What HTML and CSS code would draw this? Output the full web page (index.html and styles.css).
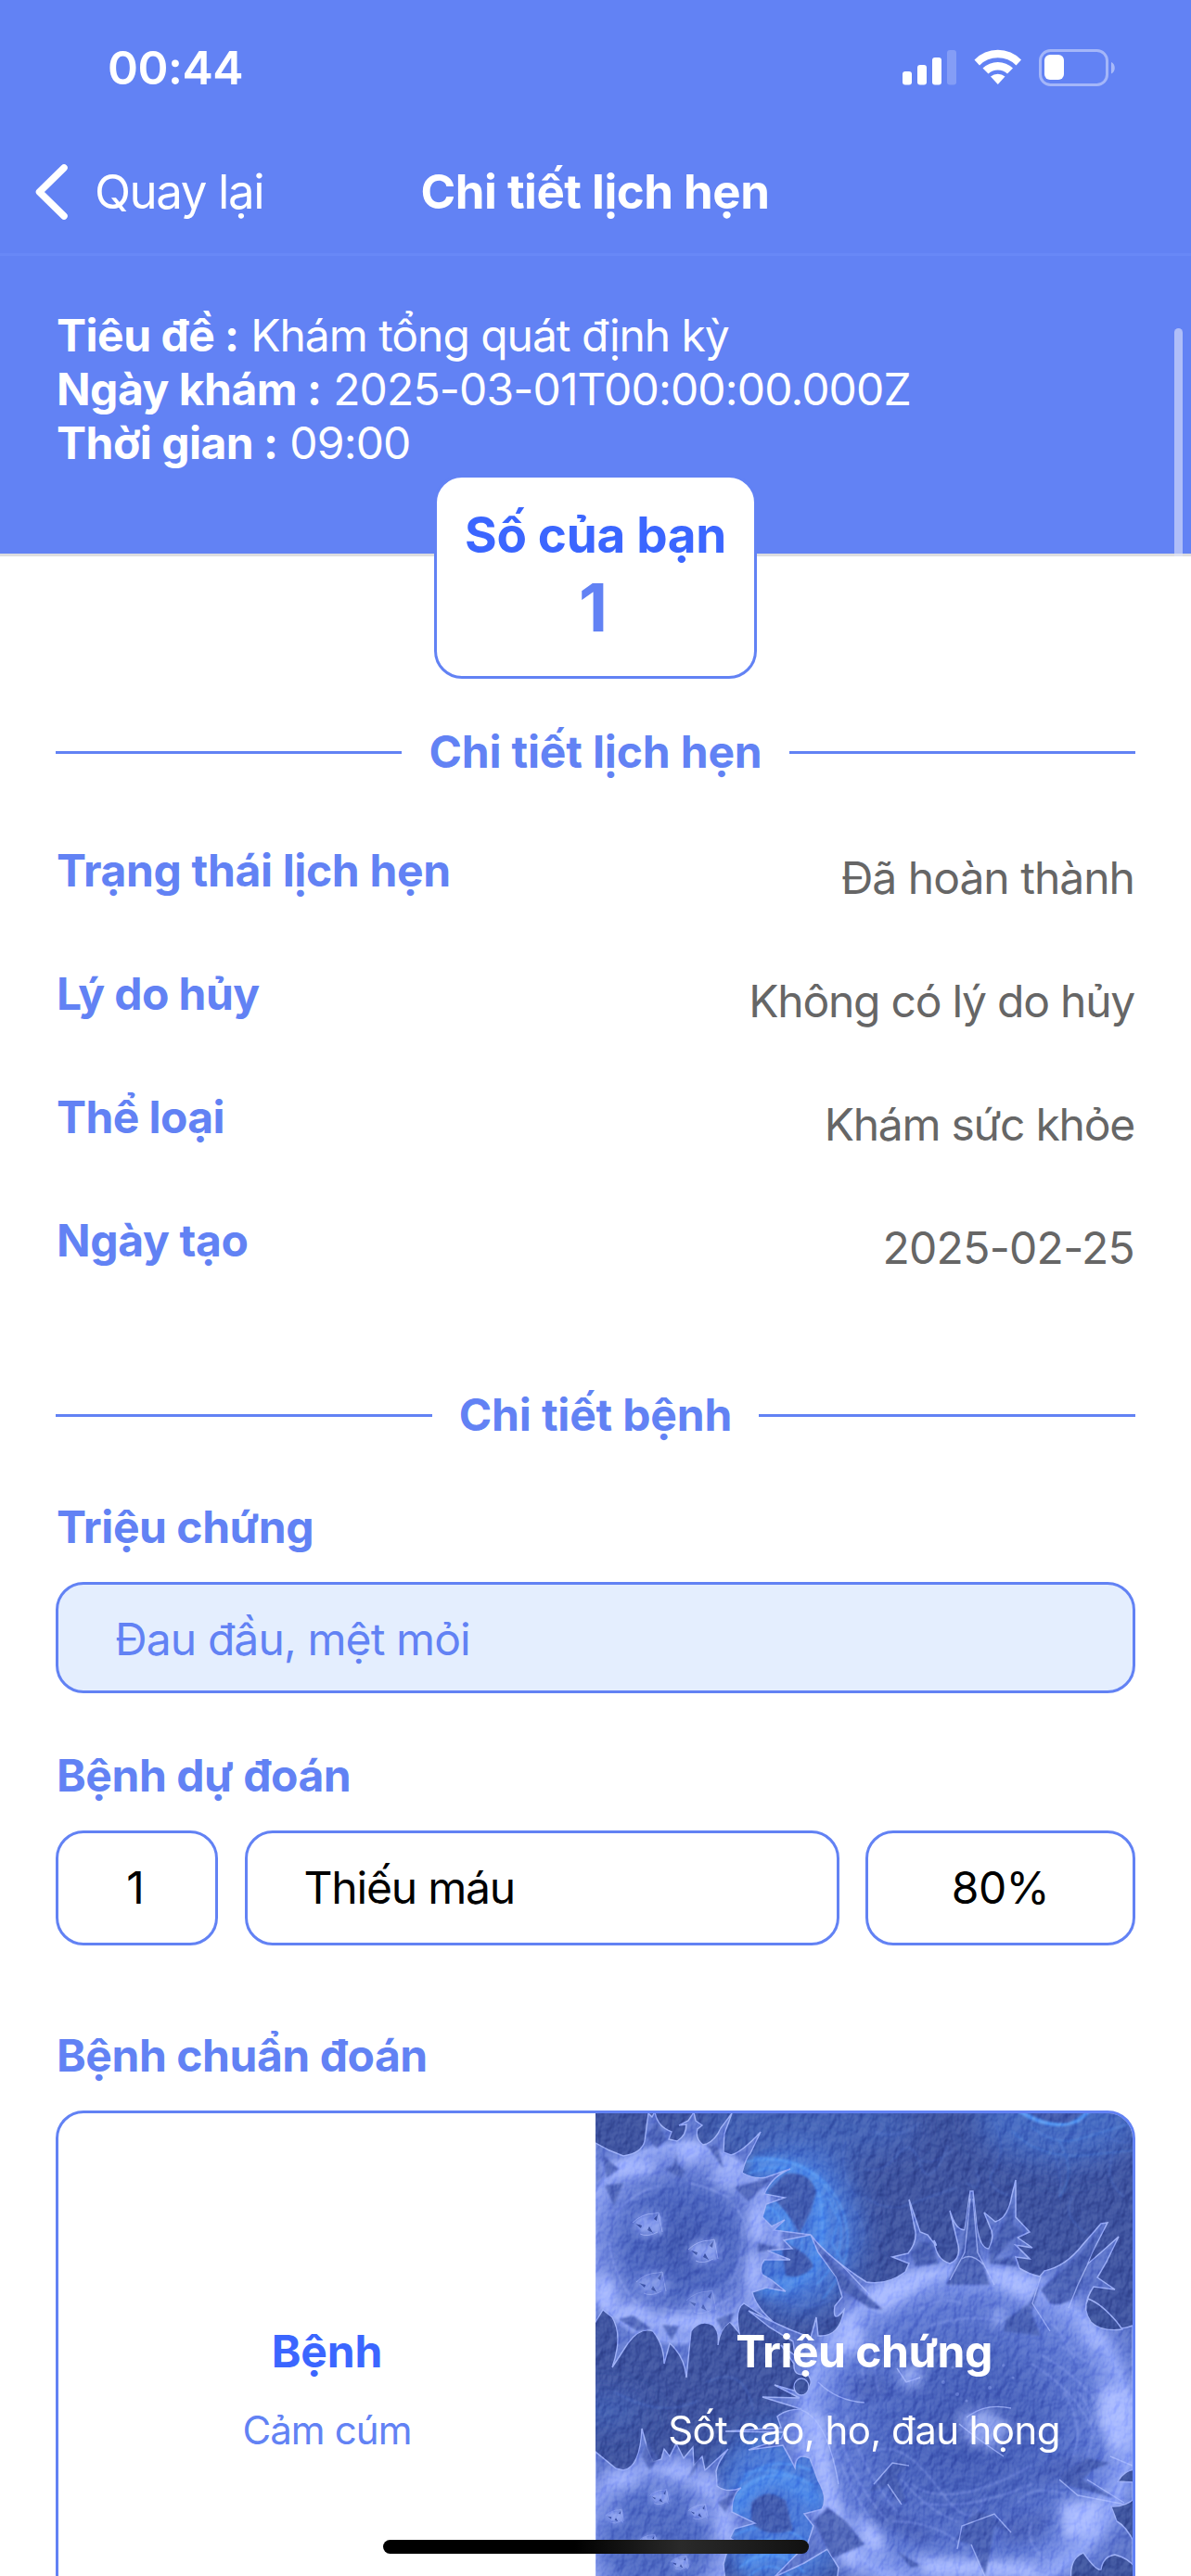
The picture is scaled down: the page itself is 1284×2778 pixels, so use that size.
FILE: index.html
```html
<!DOCTYPE html>
<html lang="vi">
<head>
<meta charset="utf-8">
<title>Chi tiết lịch hẹn</title>
<link rel="stylesheet" href="styles.css">
</head>
<body>
<div class="screen">
  <header class="header">
    <div class="status">
      <span class="time">00:44</span>
      <svg class="status-icons" width="232" height="44" viewBox="0 0 232 44" fill="#fff">
        <rect x="1" y="26" width="10" height="14.500" rx="3"/>
        <rect x="17" y="19" width="10" height="21.500" rx="3"/>
        <rect x="33" y="11" width="10" height="29.500" rx="3"/>
        <rect x="49" y="3" width="10" height="37.500" rx="3" opacity=".22"/>
        <path d="M78.500 13.500a35 35 0 0 1 50.500 0l-5.500 6a27.500 27.500 0 0 0-39.500 0z"/>
        <path d="M87.500 22.500a23.500 23.500 0 0 1 32.500 0l-6 6a15 15 0 0 0-20.500 0z"/>
        <path d="M96 31.500a12 12 0 0 1 15.500 0l-7.700 8.500z"/>
        <rect x="149.500" y="3.500" width="72" height="37" rx="11" fill="none" stroke="#fff" stroke-width="3" opacity=".42"/>
        <path d="M226 16c5 2 5 10.500 0 12.500z" opacity=".45"/>
        <rect x="154" y="8" width="21" height="27" rx="6"/>
      </svg>
    </div>
    <nav class="nav">
      <span class="back">
        <svg width="40" height="64" viewBox="0 0 40 64" fill="none" stroke="#fff" stroke-width="7.500" stroke-linecap="round" stroke-linejoin="round"><path d="M33 6 6.500 32 33 58"/></svg>
        <span>Quay lại</span>
      </span>
      <h1 class="nav-title">Chi tiết lịch hẹn</h1>
      <span></span>
    </nav>
    <div class="info">
      <p><b>Tiêu đề :</b> <span class="tight">Khám tổng quát định kỳ</span></p>
      <p><b>Ngày khám :</b> 2025-03-01T00:00:00.000Z</p>
      <p><b>Thời gian :</b> 09:00</p>
      <i class="scrollbar"></i>
    </div>
  </header>

  <section class="number">
    <span class="number-label">Số của bạn</span>
    <span class="number-value">1</span>
  </section>

  <main class="content">
    <h2 class="divider">Chi tiết lịch hẹn</h2>
    <dl class="rows">
      <div><dt>Trạng thái lịch hẹn</dt><dd>Đã hoàn thành</dd></div>
      <div><dt class="snug">Lý do hủy</dt><dd class="tight">Không có lý do hủy</dd></div>
      <div><dt class="snug">Thể loại</dt><dd class="tight">Khám sức khỏe</dd></div>
      <div><dt>Ngày tạo</dt><dd class="date">2025-02-25</dd></div>
    </dl>

    <h2 class="divider divider-second">Chi tiết bệnh</h2>

    <h3 class="label label-symptom">Triệu chứng</h3>
    <div class="symptom">Đau đầu, mệt mỏi</div>

    <h3 class="label label-predicted">Bệnh dự đoán</h3>
    <div class="predicted">
      <span class="cell rank">1</span>
      <span class="cell name">Thiếu máu</span>
      <span class="cell rate">80%</span>
    </div>

    <h3 class="label label-diagnosed">Bệnh chuẩn đoán</h3>
    <div class="card">
      <div class="pane">
        <strong>Bệnh</strong>
        <span>Cảm cúm</span>
      </div>
      <div class="pane pane-photo">
        <svg class="photo" width="579" height="600" viewBox="0 0 579 600">
          <defs>
            <radialGradient id="ga" gradientUnits="userSpaceOnUse" cx="92" cy="140" r="112">
              <stop offset="0" stop-color="#4058b0"/><stop offset=".5" stop-color="#4d67c2"/><stop offset=".78" stop-color="#7289e0"/><stop offset=".95" stop-color="#8da2f3"/><stop offset="1" stop-color="#6078d0"/>
            </radialGradient>
            <radialGradient id="gb" gradientUnits="userSpaceOnUse" cx="65" cy="462" r="98">
              <stop offset="0" stop-color="#4a64bd"/><stop offset=".5" stop-color="#526dc8"/><stop offset=".8" stop-color="#889df0"/><stop offset=".95" stop-color="#7389de"/><stop offset="1" stop-color="#6078d0"/>
            </radialGradient>
            <radialGradient id="gc" gradientUnits="userSpaceOnUse" cx="400" cy="345" r="205">
              <stop offset="0" stop-color="#4159b3"/><stop offset=".4" stop-color="#4b65c0"/><stop offset=".7" stop-color="#607ad6"/><stop offset=".86" stop-color="#8da3f6"/><stop offset=".93" stop-color="#677fd8"/><stop offset="1" stop-color="#5b73ca"/>
            </radialGradient>
            <filter id="soft" x="-50%" y="-50%" width="200%" height="200%"><feGaussianBlur stdDeviation="6"/></filter>
            <filter id="softer" x="-50%" y="-50%" width="200%" height="200%"><feGaussianBlur stdDeviation="16"/></filter>
            <filter id="fine" x="-20%" y="-20%" width="140%" height="140%"><feGaussianBlur stdDeviation="1.200"/></filter>
            <filter id="skin" x="0" y="0" width="100%" height="100%" color-interpolation-filters="sRGB">
              <feTurbulence type="fractalNoise" baseFrequency=".11 .07" numOctaves="3" seed="7"/>
              <feDiffuseLighting surfaceScale="4" diffuseConstant=".85" lighting-color="#fff"><feDistantLight azimuth="235" elevation="42"/></feDiffuseLighting>
            </filter>
            <g id="crater">
              <ellipse rx="17" ry="13" fill="#8da2f3" opacity=".8" filter="url(#soft)"/>
              <path d="M-16-2Q-10-8-5-10L-3-4 4-5 9-12 13-8 11 2 14 12 8 7 2 9-1 4-8 8Z" fill="#8ea3f2" opacity=".65" filter="url(#fine)"/>
              <path d="M-15-1-8 1-9 4ZM5-6 9-11 8-4ZM0 2l4 7-6-3Z" fill="#3b51a3"/>
              <path d="M-18-2Q-8-12 6-12L10-13 14 8M-10 10Q-2 14 9 8" fill="none" stroke="#a7b7fb" stroke-width="1" opacity=".7"/>
            </g>
            <path id="a" d="M0 32 15 40 30 46Q50 43 53 30L57 0 61 4 64-2Q66 14 82 20L79 28 88 30Q98 24 98 12L90 13 100 8 106-1 108 8 115 13 110 17Q107 27 116 34L120 33Q130 28 135 16L147 0 139 22 138 42 146 45Q158 42 178 20L167 43Q162 48 158 64 172 72 184 69L210 60Q190 68 182 87L204 91 184 98 180 112 190 122 204 115 192 126 232 131 203 137 212 146 185 148 210 158 182 158Q176 166 180 174L190 180 205 192 184 188 169 193Q173 210 195 228L160 205Q150 210 155 237L145 225Q134 232 132 250 134 234 126 228 112 222 103 235L98 285Q96 262 80 248L74 270Q74 250 62 235 48 230 35 248L18 274Q30 240 18 220L8 212 0 225Z"/>
            <path id="b" d="M0 365 22 383 30 385Q48 382 50 340L56 362 62 376 71 373 74 362 80 370 87 356 95 372 105 360 106 380 115 370 118 385 143 362Q132 376 130 386L131 402Q142 410 157 404 147 410 147 430L172 442 150 448 145 458 165 470 142 472 138 486 150 600 0 600Z"/>
            <path id="c" d="M232 131Q250 155 292 182 Q314 186 334 171L338 162 320 155 337 151Q346 140 345 128L338 93 350 128 358 131Q372 150 365 137 367 158 382 162 394 158 391 142L382 105Q388 126 398 126L404 84 407 84 411 122Q415 146 424 146 431 132 425 122L419 107 431 117Q445 113 449 88L453 72 453 112 468 128 455 134 471 145 453 142 468 157 453 155 457 167Q468 174 479 176L484 170Q507 165 525 142L545 119 552 118 535 151 530 163 545 150 564 133 551 160 541 177 560 190 537 187Q521 210 538 228 556 237 579 229L579 600 248 600 262 490 250 470 225 485 193 500 229 463 235 445 225 432 244 427Q251 415 240 396L231 372Q216 365 215 382 209 370 202 358L165 363 200 351 203 344 140 343 200 339 196 327Q205 319 222 319L180 306 220 307 193 293 224 302Q238 292 228 281 213 285 214 270L200 250 215 261 213 246 188 231 165 213 209 233 232 242 238 220 240 240Q263 242 268 212 255 228 258 208L266 198 260 177 240 150Z"/>
            <clipPath id="clip-c"><use href="#c"/></clipPath>
            <clipPath id="clip-a"><use href="#a"/></clipPath>
          </defs>
          <rect width="579" height="600" fill="#3d529f"/>
          <g filter="url(#softer)" fill="#4a78d8">
            <ellipse cx="215" cy="125" rx="70" ry="88"/>
            <ellipse cx="200" cy="425" rx="75" ry="90"/>
            <ellipse cx="500" cy="5" rx="90" ry="50" opacity=".6"/>
            <ellipse cx="230" cy="15" rx="120" ry="40" opacity=".4"/>
            <ellipse cx="5" cy="320" rx="50" ry="14" opacity=".5"/>
          </g>
          <g fill="none" stroke="#5aa1fb" filter="url(#fine)">
            <g filter="url(#soft)" stroke="#4f92f2" stroke-width="13" opacity=".85"><path d="M165 58Q205 48 238 78 250 130 232 168 205 190 178 190"/><path d="M148 435Q160 400 195 392 225 405 240 420"/><path d="M160 490Q190 460 225 480"/></g>
            <path d="M178 115Q195 98 203 120T185 140" stroke-width="16" opacity=".35"/>
            <path d="M162 52Q220 42 250 82 285 140 238 185M170 48Q235 45 262 95 288 150 245 200M182 92Q215 100 212 145M186 86Q226 92 222 150M182 100Q205 105 202 140M240 85Q250 115 240 160M165 65Q190 55 212 60M250 90 262 115 255 140 266 160" stroke-width="1.800" opacity=".65"/>
            <path d="M150 415Q175 380 225 395M155 400Q185 365 232 385M160 390Q190 375 235 402" stroke-width="3" opacity=".5"/>
            <path d="M150 455Q190 435 225 460M150 470Q190 448 228 475M155 490Q190 460 225 495M165 500Q190 475 215 505" stroke-width="2" opacity=".7"/>
            <path d="M455-4Q490 20 520 8L535-5" stroke-width="4" opacity=".85"/>
            <path d="M470 15Q495 35 520 28T579 10M450 20Q480 50 530 45T579 40M500 30Q520 65 500 90" stroke-width="1.500" opacity=".35"/>
          </g>
          <g fill="#3e55a8" filter="url(#fine)">
            <path d="M205 65Q232 62 238 85L232 105 220 130Q208 105 185 85Z" opacity=".85"/>
            <path d="M200 138Q230 150 235 165 222 180 205 175Z" opacity=".9"/>
            <path d="M168 420Q185 402 205 418L213 450Q180 458 168 440Z" opacity=".85"/>
            <path d="M465-3H530L510 10Q485 12 465-3Z" opacity=".85"/>
          </g>
          <g fill="none" stroke="#5c84e4" stroke-width="1.500" opacity=".35" filter="url(#fine)">
            <path d="M290 60Q310 65 325 45T350 55 380 35M290 90Q315 108 340 98T390 80M350 50Q360 58 385 40M300 20Q325 30 350 10M430 10Q445 40 430 60T450 90M490 30Q505 65 500 90M515 90Q500 110 530 130M560 40Q545 70 570 90M120 290Q160 270 170 320M20 300Q70 330 110 310M410 60Q420 90 400 75M255 200Q230 215 200 200M270 30Q260 60 280 90M275 100Q300 130 280 150M545 20Q560 35 579 30"/>
          </g>

          <use href="#a" fill="url(#ga)" stroke="#9aadf6" stroke-width="1.400"/>
          <g clip-path="url(#clip-a)">
            <g fill="#a3b5ff" filter="url(#soft)">
              <ellipse cx="102" cy="40" rx="15" ry="12"/><ellipse cx="35" cy="58" rx="30" ry="9"/><ellipse cx="143" cy="65" rx="16" ry="18" opacity=".7"/><ellipse cx="174" cy="118" rx="9" ry="24"/><ellipse cx="170" cy="172" rx="8" ry="24"/><ellipse cx="100" cy="225" rx="50" ry="9"/><ellipse cx="10" cy="195" rx="12" ry="20"/><ellipse cx="40" cy="215" rx="20" ry="9"/>
            </g>
            <path d="M86 30Q90 60 74 60L92 70 97 62 88 55ZM120 34 138 60 132 36ZM150 80Q165 75 190 70L165 95ZM55 25 66 38 76 28 66 8ZM8 45 25 60 12 70ZM10 78 30 75 20 100ZM175 140 200 145 175 150Z" fill="#465db2" opacity=".8" filter="url(#fine)"/>
            <g filter="url(#fine)" fill="#4860b5" opacity=".8"><path d="M25 222 45 235 60 232 40 218ZM72 228 82 245 90 230ZM130 222 140 240 150 215Z"/></g>
            <path d="M0 75Q25 65 60 62M100 75Q125 80 145 92M120 70Q135 75 150 70M20 110Q40 85 70 78M15 140Q20 180 45 205M70 210Q110 220 145 200M145 185Q160 160 158 120M150 100Q168 120 166 160" fill="none" stroke="#9db0fb" stroke-width="1.500" opacity=".55" filter="url(#fine)"/>
          </g>
          <use href="#crater" x="58" y="120"/>
          <use href="#crater" x="118" y="149"/>
          <use href="#crater" x="62" y="184" opacity=".8"/>
          <use href="#crater" x="116" y="204" opacity=".6"/>

          <use href="#b" fill="url(#gb)" stroke="#9aadf6" stroke-width="1.400"/>
          <g fill="#a3b5ff" filter="url(#soft)" opacity=".9"><ellipse cx="90" cy="385" rx="16" ry="8"/><ellipse cx="28" cy="395" rx="18" ry="7"/><ellipse cx="138" cy="445" rx="7" ry="20"/><ellipse cx="122" cy="400" rx="12" ry="9"/></g>
          <path d="M50 370 58 385 68 372 56 355ZM100 395 110 370 114 375ZM132 420 152 408 140 430Z" fill="#465db2" opacity=".75" filter="url(#fine)"/>
          <use href="#crater" transform="translate(70 414) scale(.65)"/>
          <use href="#crater" transform="translate(112 430) scale(.65)"/>
          <use href="#crater" transform="translate(22 435) scale(.6)"/>
          <use href="#crater" transform="translate(58 462) scale(.6)"/>
          <use href="#crater" transform="translate(92 485) scale(.6)"/>

          <use href="#c" fill="url(#gc)" stroke="#9aadf6" stroke-width="1.500"/>
          <g clip-path="url(#clip-c)">
            <g fill="#a6b8ff" filter="url(#soft)">
              <path d="M285 195Q335 165 385 168L355 185 310 215ZM420 168Q455 168 478 182L468 205 425 180ZM268 215 285 225 290 255 255 262ZM225 320 245 325 262 420 290 500 262 480 240 400ZM545 292 579 300V350L560 370 540 330ZM500 420 550 415 540 455 505 460ZM520 205 535 235 560 250 530 250ZM280 430 308 450 312 475 290 470ZM340 478 400 480 470 485 480 500H360Z"/>
              <path d="M390 325 420 318 448 335 430 362 400 355ZM325 275 355 270 350 295 330 295ZM425 215 445 210 435 235Z" opacity=".75"/>
            </g>
            <g fill="#445bb0" filter="url(#fine)" opacity=".85">
              <path d="M402 95 395 150 378 185H425L414 150 408 95ZM340 150 350 138 362 140 370 162 345 165ZM440 118 450 95V120L462 128 445 140 430 158 450 155 455 165 425 162 425 145ZM524 150 545 125 530 165 520 195Q505 210 490 205L480 190 500 172ZM480 182 468 205 443 222 440 235 480 240 470 215ZM243 148 268 175 310 212 295 210 265 190Z"/>
              <path d="M318 380Q330 370 338 380L325 390 335 420 322 416 315 402 295 408ZM408 430Q425 428 448 452L430 445 425 475 420 498 405 465 388 460ZM500 390 530 372 555 377 535 385 525 395 560 415 505 400ZM235 440 250 425 270 440 290 465 255 480ZM325 472 350 488 340 490Z"/>
            </g>
            <g fill="#4259b0" filter="url(#soft)" opacity=".6">
              <path d="M268 290 305 280 320 300 290 315ZM290 410 320 425 370 455 350 465 300 440ZM440 440 490 430 480 460 440 465ZM470 395 500 370 540 372 505 395Z"/>
            </g>
            <g fill="none" stroke="#abbcff" stroke-width="1.400" opacity=".75">
              <path d="M404 92 398 150 382 180M407 92 412 150 430 185M395 157Q405 150 418 163M532 160 520 185 510 210M480 176 471 205 490 235M262 160 295 195M258 175 262 200M400 328Q420 312 448 318M392 335Q410 350 440 370M300 400 320 377 338 380M315 400 330 422M390 470 395 445 430 432 448 452M500 395 520 412 572 422M530 395 570 420M405 465 420 500M555 370 579 380M222 320Q250 330 262 400"/>
              <path d="M325 275 335 290 350 285M240 290Q260 310 290 312"/>
            </g>
            <g fill="none" stroke="#8ea3f2" stroke-width="1.500" opacity=".55" filter="url(#fine)">
              <path d="M250 330Q262 390 305 450M258 325Q270 390 315 440M270 325Q285 380 325 430M300 365Q330 350 370 405T420 410M340 400Q380 430 470 380M350 420Q400 430 470 400M470 270Q520 300 540 350M480 260Q530 290 545 320M450 195Q500 230 520 260M345 215Q370 195 395 205M360 230Q400 215 440 225M320 440Q370 440 400 470M470 440Q460 470 500 490M300 220Q280 250 290 290M312 222Q295 260 305 300M500 250Q530 270 560 280M490 220 520 270M330 395Q360 430 390 440M520 300Q545 330 530 370M505 300Q528 340 515 370M455 420Q470 400 505 410"/>
            </g>
            <g fill="#8fa4f2" opacity=".45"><circle cx="375" cy="290" r="2"/><circle cx="390" cy="303" r="2"/><circle cx="415" cy="280" r="2.500"/><circle cx="425" cy="296" r="2"/><circle cx="440" cy="272" r="1.800"/><circle cx="400" cy="310" r="1.600"/><circle cx="450" cy="285" r="1.500"/><circle cx="385" cy="274" r="1.500"/></g>
          </g>
          <g fill="#3d539e" stroke="#9aadf6" stroke-width="1.400">
            <path d="M531 200Q545 205 562 225L568 233Q545 236 534 225 525 212 531 200Z"/>
            <path d="M563 397Q570 385 581 384V398Z"/>
            <path d="M556 424Q570 425 582 415V465Q572 445 562 440Z"/>
            <path d="M513 505Q510 480 526 474 540 494 545 492 547 478 560 476 575 480 582 490V520Z"/>
            <ellipse cx="222" cy="295" rx="8" ry="9"/>
          </g>
          <g class="grain">
            <rect width="579" height="600" filter="url(#skin)"/>
          </g>
        </svg>
        <strong>Triệu chứng</strong>
        <span>Sốt cao, ho, đau họng</span>
      </div>
    </div>
  </main>
  <i class="home-bar"></i>
</div>
</body>
</html>
```

FILE: styles.css
```css
* { box-sizing: border-box; margin: 0; padding: 0; }

body {
  background: #fff;
  font-family: Inter, "Noto Sans", sans-serif;
  font-size: 48px;
  line-height: 58px;
  letter-spacing: -0.9px;
  color: #000;
}

.screen {
  position: relative;
  width: 1284px;
  height: 2778px;
  overflow: hidden;
}

.header {
  height: 600px;
  background: #6282f4;
  border-bottom: 3px solid #dddddf;
  color: #fff;
}

.status {
  height: 148px;
  padding: 0 80px 2px 116px;
  display: flex;
  align-items: center;
  justify-content: space-between;
}
.time { font-size: 50px; font-weight: 600; letter-spacing: -0.5px; }

.nav {
  height: 128px;
  padding: 0 37px 7px 36px;
  border-bottom: 3px solid #6888f7;
  display: grid;
  grid-template-columns: 1fr auto 1fr;
  align-items: center;
  font-size: 51px;
}
.back { display: flex; align-items: center; gap: 26px; letter-spacing: -1.4px; }
.nav-title { font-size: 51px; font-weight: 700; letter-spacing: -0.5px; }

.info { position: relative; height: 321px; padding: 57px 61px 0; }
.info p { line-height: 58px; letter-spacing: -0.85px; }
.info b { font-weight: 700; letter-spacing: -0.5px; }
.info .tight { letter-spacing: -1.05px; }
.scrollbar {
  position: absolute;
  top: 78px;
  right: 9px;
  width: 9px;
  height: 246px;
  border-radius: 5px 5px 0 0;
  background: rgba(222, 228, 250, 0.62);
}

.number {
  position: relative;
  width: 348px;
  height: 220px;
  margin: -88px auto 0;
  padding-top: 32px;
  border: 3px solid #6282f4;
  border-radius: 30px;
  background: #fff;
  display: flex;
  flex-direction: column;
  align-items: center;
}
.number-label { font-size: 53px; line-height: 60px; font-weight: 700; letter-spacing: -0.3px; color: #3b66ff; }
.number-value { padding-right: 6px; font-size: 72px; line-height: 96px; font-weight: 700; color: #6282f4; }

.content { padding: 0 60px; }

.divider {
  margin-top: 50px;
  display: flex;
  align-items: center;
  gap: 29px;
  font-size: 48px;
  font-weight: 700;
  letter-spacing: -0.15px;
  color: #6282f4;
}
.divider::before,
.divider::after { content: ""; flex: 1; height: 3px; background: #6282f4; }
.divider-second { margin-top: 55px; }

.rows { margin-top: 70px; }
.rows div { height: 133px; display: flex; justify-content: space-between; }
.rows dt { padding-left: 1px; font-weight: 700; letter-spacing: -0.35px; color: #6282f4; }
.rows .snug { letter-spacing: -0.6px; }
.rows dd { padding: 8px 1px 0 0; letter-spacing: -1px; color: #666; }
.rows .tight { letter-spacing: -1.25px; }
.rows .date { letter-spacing: -0.7px; }

.label { padding-left: 1px; font-size: 48px; font-weight: 700; letter-spacing: -0.45px; color: #6282f4; }
.label-symptom { margin-top: 63px; }
.label-predicted { margin-top: 60px; }
.label-diagnosed { margin-top: 90px; }

.symptom {
  height: 120px;
  margin-top: 30px;
  padding: 3px 61px 0;
  border: 3px solid #6282f4;
  border-radius: 30px;
  background: #e4eefe;
  color: #6282f4;
  display: flex;
  align-items: center;
}

.predicted { margin-top: 30px; display: flex; justify-content: space-between; }
.cell {
  height: 124px;
  border: 3px solid #6282f4;
  border-radius: 30px;
  display: flex;
  align-items: center;
  justify-content: center;
}
.rank { width: 175px; padding-right: 4px; }
.name { width: 641px; justify-content: flex-start; padding-left: 61px; letter-spacing: -1.2px; }
.rate { width: 291px; letter-spacing: -0.6px; }

.card {
  height: 606px;
  margin-top: 30px;
  border: 3px solid #6282f4;
  border-radius: 30px;
  overflow: hidden;
  display: grid;
  grid-template-columns: 579px 579px;
}
.pane {
  position: relative;
  padding-top: 228px;
  display: flex;
  flex-direction: column;
  align-items: center;
  gap: 30px;
  color: #6282f4;
}
.pane strong { position: relative; font-weight: 700; letter-spacing: -0.1px; color: #3b66ff; }
.pane span { position: relative; font-size: 42px; line-height: 51px; }
.pane-photo,
.pane-photo strong { color: #fff; }
.pane-photo strong { letter-spacing: -0.5px; }
.pane-photo span { letter-spacing: -0.6px; }
.photo { position: absolute; left: 0; top: 0; }
.grain { mix-blend-mode: soft-light; opacity: 0.35; }

.home-bar {
  position: absolute;
  left: 413px;
  bottom: 24px;
  width: 459px;
  height: 15px;
  border-radius: 8px;
  background: linear-gradient(90deg, #000 45%, #2a2a2a 70%, #111 100%);
}
```
